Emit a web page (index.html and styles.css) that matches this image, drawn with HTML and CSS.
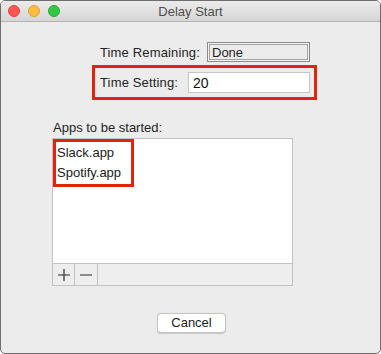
FILE: index.html
```html
<!DOCTYPE html>
<html>
<head>
<meta charset="utf-8">
<link rel="stylesheet" href="styles.css">
</head>
<body>
<div class="window">
  <div class="titlebar">
    <div class="lights">
      <span class="light red"></span>
      <span class="light yellow"></span>
      <span class="light green"></span>
    </div>
    <div class="title">Delay Start</div>
  </div>
  <div class="content">
    <div class="row-remaining">
      <span class="label">Time Remaining:</span>
      <div class="readonly">Done</div>
    </div>
    <div class="row-setting">
      <span class="label">Time Setting:</span>
      <div class="input">20</div>
    </div>
    <div class="apps-label">Apps to be started:</div>
    <div class="list">
      <div class="list-body">
        <div class="highlight">
          <div class="item">Slack.app</div>
          <div class="item">Spotify.app</div>
        </div>
      </div>
      <div class="list-footer">
        <div class="tool-btn">
          <svg width="14" height="14" viewBox="0 0 14 14"><path d="M7 1v12M1 7h12" stroke="#2b2b2b" stroke-width="1.2" fill="none"/></svg>
        </div>
        <div class="tool-btn">
          <svg width="14" height="14" viewBox="0 0 14 14"><path d="M1 7h12" stroke="#2b2b2b" stroke-width="1.2" fill="none"/></svg>
        </div>
      </div>
    </div>
    <div class="actions">
      <button class="btn">Cancel</button>
    </div>
  </div>
</div>
</body>
</html>
```
FILE: styles.css
```css
* { box-sizing: border-box; }
html, body { margin: 0; padding: 0; background: #ffffff; }
body {
  font-family: "Liberation Sans", Arial, sans-serif;
  font-size: 13px;
  color: #242424;
}
.window {
  width: 381px;
  height: 354px;
  background: #ececec;
  border: 1px solid #6e6e6e;
  border-radius: 5px;
  overflow: hidden;
  display: flex;
  flex-direction: column;
}
.titlebar {
  height: 21px;
  flex: none;
  position: relative;
  background: linear-gradient(#ebebeb, #d6d6d6);
  border-bottom: 1px solid #b3b3b3;
  display: flex;
  align-items: center;
  justify-content: center;
}
.lights {
  position: absolute;
  left: 7px;
  top: 4px;
  display: flex;
  gap: 8px;
}
.light {
  width: 12px;
  height: 12px;
  border-radius: 50%;
  display: block;
}
.red { background: #fc5753; border: 0.5px solid #de4440; }
.yellow { background: #fdbc40; border: 0.5px solid #de9f34; }
.green { background: #33c748; border: 0.5px solid #27aa35; }
.title {
  color: #4d4d4d;
  font-size: 13px;
  line-height: 16px;
  margin-top: 1px;
}
.content {
  flex: 1;
  display: flex;
  flex-direction: column;
}
.row-remaining {
  margin-top: 20px;
  margin-right: 70px;
  display: flex;
  justify-content: flex-end;
  align-items: center;
  gap: 7px;
}
.row-remaining .label { letter-spacing: 0.15px; }
.readonly {
  width: 103px;
  height: 20px;
  border: 1px solid #8a8a8a;
  box-shadow: inset 0 0 0 1px #f2f2f2, inset 0 0 0 2px #a3a3a3;
  padding: 2px 4px 0;
  line-height: 16px;
  color: #1e1e1e;
}
.row-setting {
  margin-top: 3px;
  margin-left: 91px;
  margin-right: 63px;
  height: 35px;
  border: 3px solid #e3230d;
  display: flex;
  align-items: center;
  padding: 0 4px 0 5px;
}
.row-setting .label { flex: none; width: 88px; letter-spacing: 0.15px; }
.input {
  flex: 1;
  height: 21px;
  background: #ffffff;
  border: 1px solid #c6c6c6;
  padding: 2px 4px 0;
  line-height: 17px;
  font-size: 14px;
  color: #111;
}
.apps-label {
  margin-top: 20px;
  margin-left: 52px;
  line-height: 16px;
}
.list {
  margin-top: 2px;
  margin-left: 51px;
  width: 241px;
  height: 148px;
  border: 1px solid #c2c2c2;
  display: flex;
  flex-direction: column;
}
.list-body {
  flex: 1;
  background: #ffffff;
}
.highlight {
  width: 81px;
  margin-top: 0;
  border: 3px solid #e3230d;
  padding: 1px 0 1px 1px;
}
.item {
  height: 20px;
  line-height: 20px;
  font-size: 13px;
  color: #1a1a1a;
}
.list-footer {
  height: 22px;
  flex: none;
  border-top: 1px solid #c2c2c2;
  background: #eeeeee;
  display: flex;
}
.tool-btn {
  width: 22px;
  border-right: 1px solid #c2c2c2;
  display: flex;
  align-items: center;
  justify-content: center;
}
.tool-btn + .tool-btn { width: 23px; }
.actions {
  margin-top: 27px;
  display: flex;
  justify-content: center;
  padding-left: 2px;
}
.btn {
  width: 69px;
  height: 20px;
  padding: 0;
  font-family: "Liberation Sans", Arial, sans-serif;
  font-size: 13px;
  color: #222;
  background: #ffffff;
  border: 1px solid #c4c4c4;
  border-radius: 4px;
  box-shadow: 0 0.5px 1px rgba(0,0,0,0.15);
  line-height: 18px;
}
```
